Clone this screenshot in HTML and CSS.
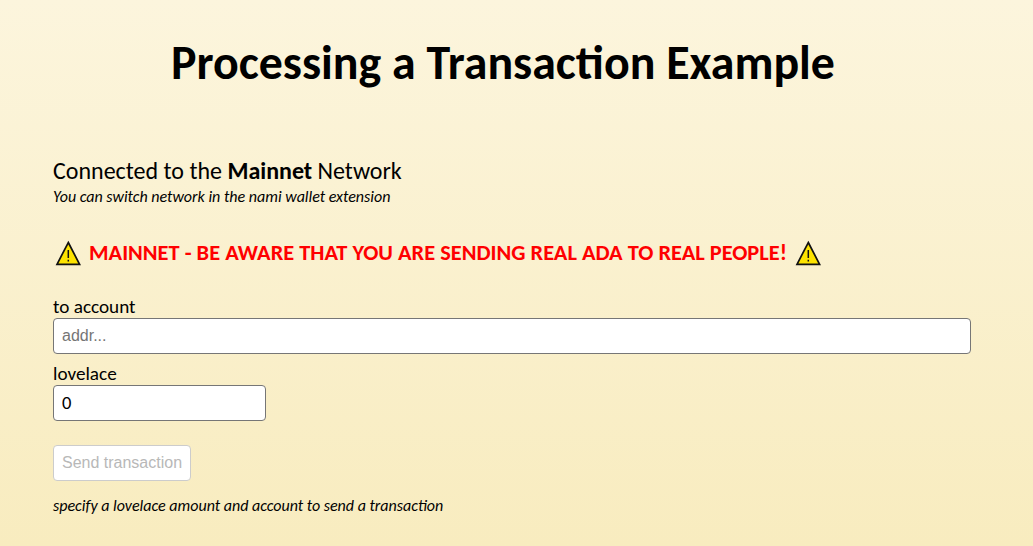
FILE: index.html
```html
<!DOCTYPE html>
<html lang="en">
<head>
<meta charset="utf-8">
<title>Processing a Transaction Example</title>
<link rel="stylesheet" href="styles.css">
</head>
<body>
<main class="page">
  <h1 class="title">Processing a Transaction Example</h1>
  <p class="network">Connected to the <b>Mainnet</b> Network</p>
  <p class="hint">You can switch network in the nami wallet extension</p>
  <p class="warning">
    <svg class="sign" viewBox="0 0 30 28"><path d="M15.3 3.5 26.6 25.3H4Z" fill="#fde300" stroke="#111" stroke-width="1.7"/><path d="M15.3 11v8M15.3 20.7v1.8" stroke="#111" stroke-width="1.5"/></svg>
    <span class="warning-text">MAINNET - BE AWARE THAT YOU ARE SENDING REAL ADA TO REAL PEOPLE!</span>
    <svg class="sign" viewBox="0 0 30 28"><path d="M15.3 3.5 26.6 25.3H4Z" fill="#fde300" stroke="#111" stroke-width="1.7"/><path d="M15.3 11v8M15.3 20.7v1.8" stroke="#111" stroke-width="1.5"/></svg>
  </p>
  <label class="label" for="to">to account</label>
  <input class="field" id="to" placeholder="addr...">
  <label class="label" for="amount">lovelace</label>
  <input class="field amount" id="amount" value="0">
  <button class="send" disabled>Send transaction</button>
  <p class="hint status">specify a lovelace amount and account to send a transaction</p>
</main>
</body>
</html>
```

FILE: styles.css
```css
* { box-sizing: border-box; }
body { margin: 0; min-height: 546px; font-family: Carlito, Calibri, "Open Sans", sans-serif; color: #000; background: linear-gradient(#fcf5dd, #f8ecbf); }
.page { display: flex; flex-direction: column; align-items: flex-start; padding: 31px 62px 0 53px; }
.title { margin: 0; width: 900px; height: 64px; line-height: 64px; font-size: 47.9px; text-align: center; white-space: nowrap; }
.network { margin: 61px 0 0; height: 29px; line-height: 29px; font-size: 24px; white-space: nowrap; }
.hint { margin: 2px 0 0; height: 20px; line-height: 20px; font-size: 16px; font-style: italic; white-space: nowrap; }
.warning { display: flex; align-items: center; gap: 6px; margin: 32px 0 0; height: 28px; }
.sign { width: 30px; height: 28px; flex: none; }
.warning-text { width: 698px; font-size: 22.4px; line-height: 28px; font-weight: bold; color: #f00; white-space: nowrap; }
.label { height: 22px; line-height: 22px; font-size: 19.2px; white-space: nowrap; }
.warning + .label { margin-top: 29px; }
.field { width: 100%; height: 36px; padding: 0 8px; border: 1px solid #767676; border-radius: 4px; background: #fff; font: 16px "Liberation Sans", Arial, sans-serif; color: #000; }
.field::placeholder { color: #757575; }
.field + .label { margin-top: 9px; }
.amount { width: 213px; padding-bottom: 2px; font: 18.5px Carlito, Calibri, sans-serif; }
.send { width: 138px; height: 36px; margin-top: 24px; padding: 0; border: 1px solid #ccc; border-radius: 4px; background: #fff; color: #b8b8b8; font: 16px "Liberation Sans", Arial, sans-serif; white-space: nowrap; }
.status { margin-top: 15px; }
```
